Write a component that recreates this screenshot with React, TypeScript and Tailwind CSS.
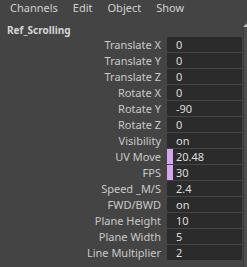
const rows: { label: string; value: string; keyed?: boolean }[] = [
  { label: "Translate X", value: "0" },
  { label: "Translate Y", value: "0" },
  { label: "Translate Z", value: "0" },
  { label: "Rotate X", value: "0" },
  { label: "Rotate Y", value: "-90" },
  { label: "Rotate Z", value: "0" },
  { label: "Visibility", value: "on" },
  { label: "UV Move", value: "20.48", keyed: true },
  { label: "FPS", value: "30", keyed: true },
  { label: "Speed _M/S", value: "2.4" },
  { label: "FWD/BWD", value: "on" },
  { label: "Plane Height", value: "10" },
  { label: "Plane Width", value: "5" },
  { label: "Line Multiplier", value: "2" },
];

const menus = ["Channels", "Edit", "Object", "Show"];

export default function App() {
  return (
    <div className="w-[247px] h-[267px] overflow-hidden bg-[#444444] font-['Noto_Sans',sans-serif] flex flex-col">
      {/* menu bar */}
      <div className="h-[22px] flex items-start pl-[10px] gap-[15px] text-[11px] leading-[15px] text-[#d2d2d2]">
        {menus.map((m) => (
          <span key={m}>{m}</span>
        ))}
      </div>

      <div className="flex flex-1 min-h-0">
        <div className="w-[242px] flex flex-col">
          <div className="h-[15px] pl-[7px] pt-[2px] text-[10px] leading-[13px] font-bold text-[#d6d6d6]">
            Ref_Scrolling
          </div>
          {rows.map((r) => (
            <div key={r.label} className="flex h-[16px] pb-[1px]">
              <div className="w-[161px] pt-[1px] text-right text-[11px] leading-[14px] text-[#c9c9c9] whitespace-nowrap">
                {r.label}
              </div>
              <div className="ml-[6px] flex-1 flex bg-[#2b2b2b] rounded-[1px] text-[11px] leading-[14px] text-[#dedede]">
                {r.keyed ? (
                  <div className="w-[6px] bg-[#d4a8ea]" />
                ) : (
                  <div className="w-[6px]" />
                )}
                <span className="pl-[3px] pt-[1px]">{r.value}</span>
              </div>
            </div>
          ))}
        </div>
        {/* scrollbar */}
        <div className="ml-[1px] w-[4px] bg-[#4d4d4d] border-l border-[#3c3c3c] flex flex-col items-center pt-[2px]">
          <div className="w-0 h-0 border-l-[3px] border-r-[3px] border-b-[3px] border-l-transparent border-r-transparent border-b-[#bdbdbd]" />
        </div>
      </div>
    </div>
  );
}
